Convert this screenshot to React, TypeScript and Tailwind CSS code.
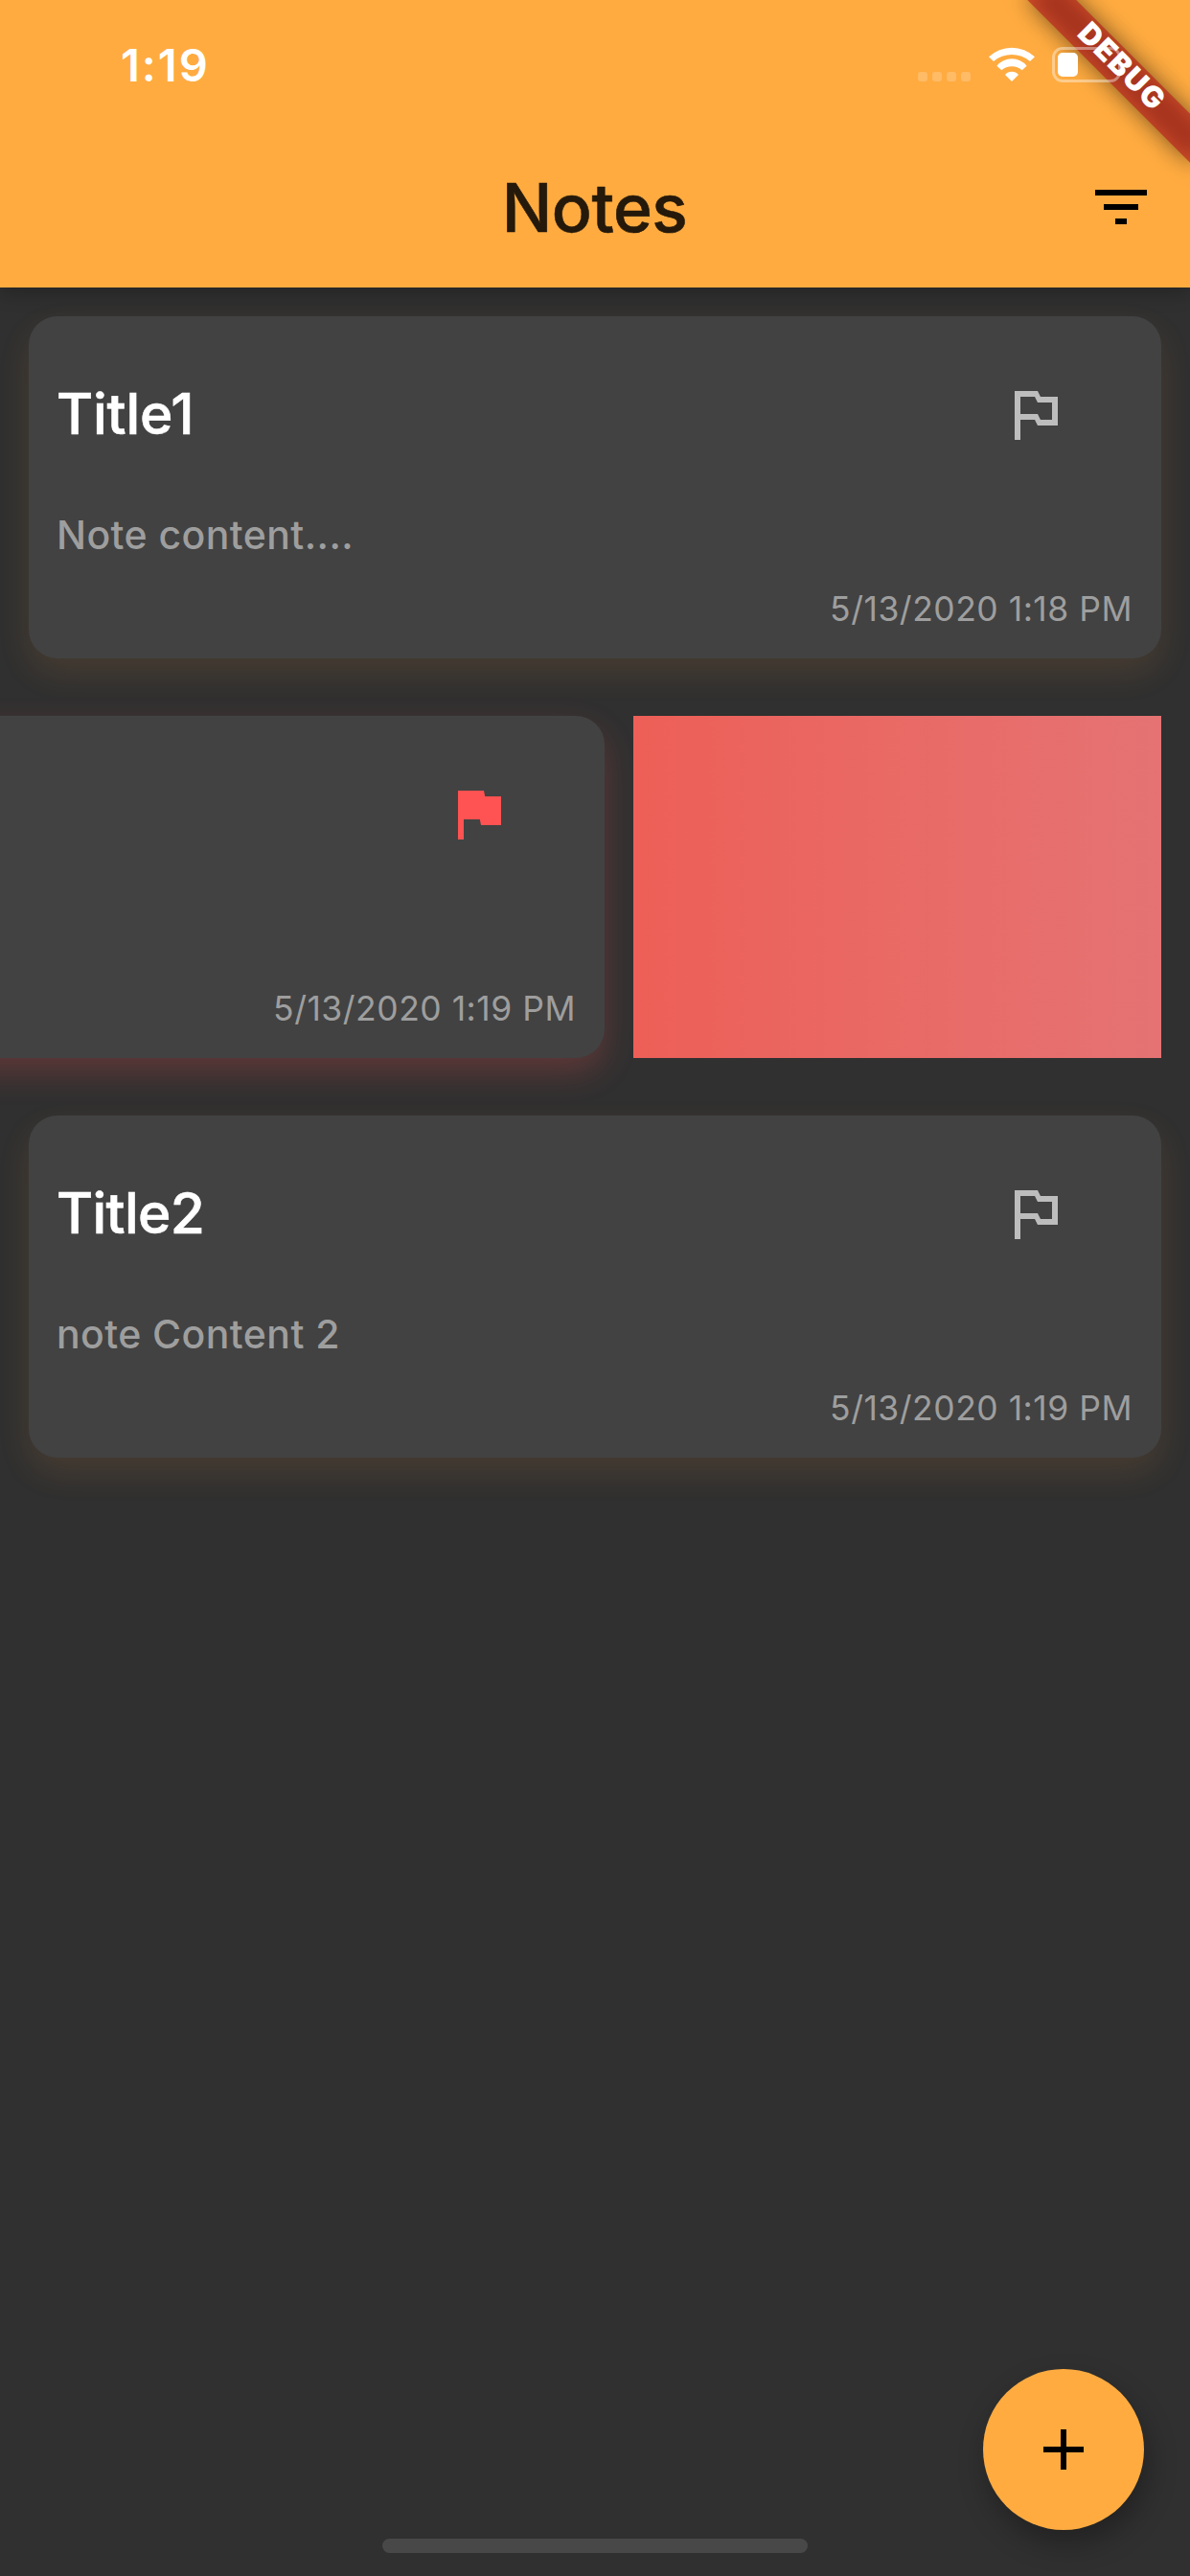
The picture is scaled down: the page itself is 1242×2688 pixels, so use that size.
import React from "react";

type Note = {
  title?: string;
  content?: string;
  date: string;
  flagged?: boolean;
  titleTracking?: string;
};

function FlagIcon({ filled }: { filled?: boolean }) {
  return (
    <svg
      viewBox="0 0 24 24"
      className={filled ? "size-[72px] fill-[#ff5252]" : "size-[72px] fill-[#bdbdbd]"}
    >
      {filled ? (
        <path d="M14.4 6L14 4H5v17h2v-7h5.6l.4 2h7V6z" />
      ) : (
        <path d="M14 6l-1-2H5v17h2v-7h5l1 2h7V6h-6zm4 8h-4l-1-2H7V6h5l1 2h5v6z" />
      )}
    </svg>
  );
}

function NoteCard({ note }: { note: Note }) {
  return (
    <article
      className={`flex h-[357px] w-[1182px] shrink-0 flex-col rounded-[30px] bg-[#424242] px-[30px] pt-[66px] ${
        note.flagged
          ? "shadow-[0_15px_34px_rgba(255,82,82,0.23)]"
          : "shadow-[0_15px_34px_rgba(255,160,64,0.115)]"
      }`}
    >
      <div className="flex h-[72px] items-center justify-between pr-[66px]">
        <h2
          className={`-ml-px text-[58.6px] leading-[72px] font-medium text-white [-webkit-text-stroke:0.6px_white] ${note.titleTracking ?? ""}`}
        >
          {note.title}
        </h2>
        <FlagIcon filled={note.flagged} />
      </div>
      <p className="mt-[60px] -ml-px h-[60px] text-[41px] leading-[60px] font-medium tracking-[0.42px] text-[#9e9e9e]">
        {note.content}
      </p>
      <p className="mt-[24px] text-right text-[35.5px] leading-[48px] tracking-[0.5px] text-[#9e9e9e]">
        {note.date}
      </p>
    </article>
  );
}

function StatusBar() {
  return (
    <div className="flex h-[132px] items-start justify-between pr-[72px] pl-[126px]">
      <span className="pt-[38px] text-[47px] leading-[60px] font-semibold tracking-[2px] text-white">
        1:19
      </span>
      <div className="relative z-20 flex items-start pt-[49px]">
        <div className="mt-[26px] flex gap-[5px]">
          <i className="size-[10px] rounded-[3px] bg-white/20" />
          <i className="size-[10px] rounded-[3px] bg-white/20" />
          <i className="size-[10px] rounded-[3px] bg-white/20" />
          <i className="size-[10px] rounded-[3px] bg-white/20" />
        </div>
        <svg viewBox="395 148 144 108" className="ml-[19px] h-[36px] w-[48px] fill-white">
          <path d="M395 179A104 104 0 0 1 539 179L524 193A88 88 0 0 0 410 193Z" />
          <path d="M420 207A61 61 0 0 1 514 207L499 221A49 49 0 0 0 435 221Z" />
          <path d="M446 235A28 28 0 0 1 488 235L467 256Z" />
        </svg>
        <div className="ml-[18px] h-[37px] w-[72px] rounded-[11px] border-[3px] border-white/40 p-[3px]">
          <div className="h-[25px] w-[21px] rounded-[5px] bg-white" />
        </div>
      </div>
    </div>
  );
}

function DebugBanner() {
  return (
    <div className="absolute top-0 right-0 z-10 size-0 rotate-45">
      <div className="absolute top-[84px] -left-[120px] h-[36px] w-[240px] bg-black/50 blur-[12px]" />
      <div className="absolute top-[84px] -left-[120px] h-[36px] w-[240px] bg-[#b71c1c]/63" />
    </div>
  );
}

function DebugLabel() {
  return (
    <div className="absolute top-0 right-0 z-30 size-0 rotate-45">
      <div className="absolute top-[81px] -left-[121px] w-[240px] text-center text-[31px] leading-[36px] font-black tracking-[1.4px] text-white">
        DEBUG
      </div>
    </div>
  );
}

export default function App() {
  return (
    <div className="relative flex h-[2688px] w-[1242px] flex-col overflow-hidden bg-[#303030] font-['Inter',sans-serif]">
      <header className="relative h-[300px] shrink-0 bg-[#ffab40] shadow-[0_6px_18px_rgba(0,0,0,0.25)]">
        <StatusBar />
        <div className="grid h-[168px] grid-cols-[1fr_auto_1fr] items-center pr-[36px]">
          <span />
          <h1 className="ml-[35px] pt-px text-[69.6px] leading-[84px] font-medium tracking-[-0.5px] text-[#24190a] [-webkit-text-stroke:0.6px_#24190a]">
            Notes
          </h1>
          <svg viewBox="0 0 24 24" className="size-[72px] justify-self-end fill-black">
            <path d="M10 18h4v-2h-4v2zM3 6v2h18V6H3zm3 7h12v-2H6v2z" />
          </svg>
        </div>
        <DebugBanner />
        <DebugLabel />
      </header>

      <main className="flex flex-1 flex-col gap-[60px] pt-[30px]">
        <div className="ml-[30px]">
          <NoteCard
            note={{
              title: "Title1",
              content: "Note content....",
              date: "5/13/2020 1:18 PM",
              titleTracking: "tracking-[-0.2px]",
            }}
          />
        </div>
        <div className="-ml-[551px] flex gap-[30px]">
          <NoteCard note={{ date: "5/13/2020 1:19 PM", flagged: true }} />
          <div className="w-[551px] shrink-0 bg-linear-to-r from-[#ed5f57] to-[#e57373]" />
        </div>
        <div className="ml-[30px]">
          <NoteCard
            note={{
              title: "Title2",
              content: "note Content 2",
              date: "5/13/2020 1:19 PM",
              titleTracking: "tracking-[-0.7px]",
            }}
          />
        </div>
      </main>

      <footer className="flex flex-col">
        <button className="mr-[48px] flex size-[168px] items-center justify-center self-end rounded-full bg-[#ffab40] shadow-[4px_14px_30px_rgba(0,0,0,0.3)]">
          <svg viewBox="0 0 24 24" className="size-[72px] fill-black">
            <path d="M19 13h-6v6h-2v-6H5v-2h6V5h2v6h6v2z" />
          </svg>
        </button>
        <div className="mt-[9px] mb-[24px] h-[15px] w-[444px] self-center rounded-full bg-[#484848]" />
      </footer>
    </div>
  );
}
